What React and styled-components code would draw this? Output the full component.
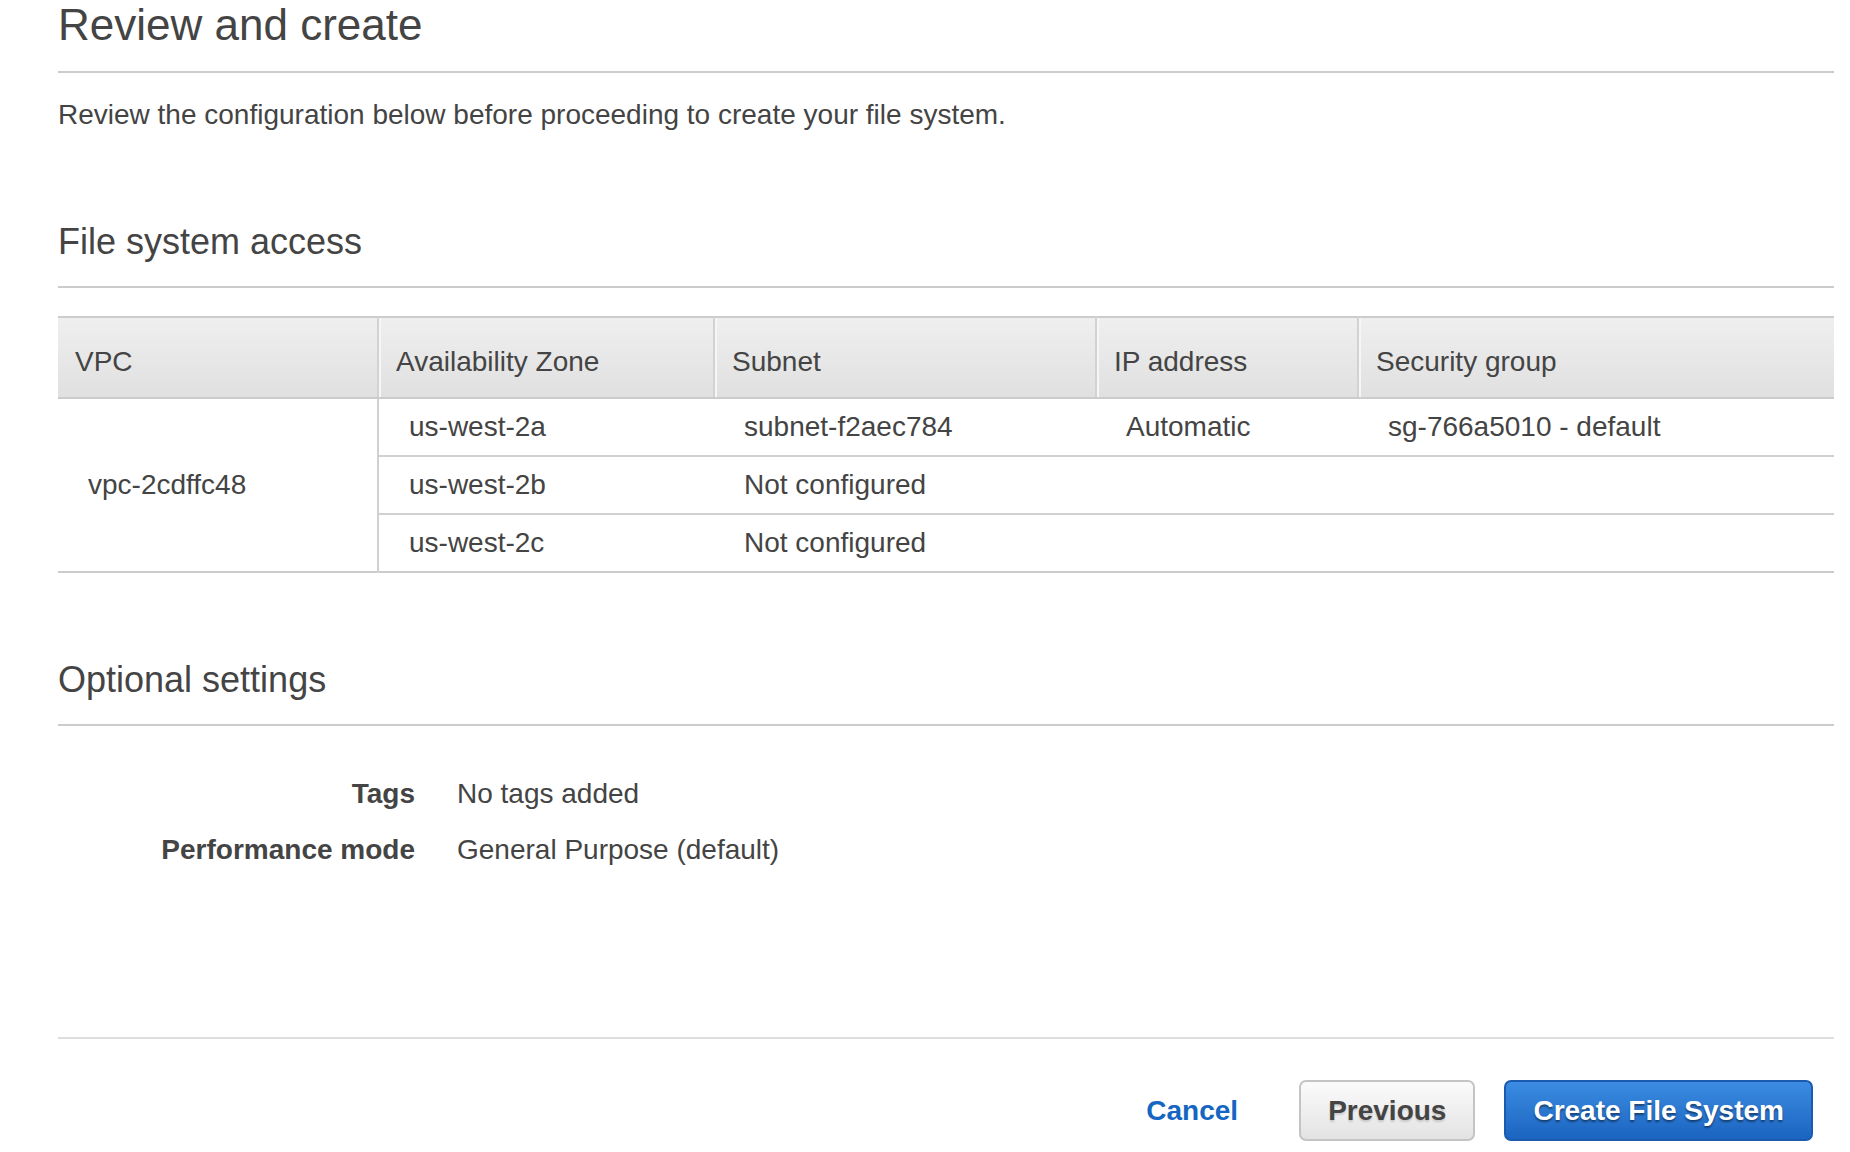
import React from "react";
import styled, { createGlobalStyle } from "styled-components";

const GlobalStyle = createGlobalStyle`
  html, body {
    margin: 0;
    padding: 0;
    background: #fff;
  }
  body {
    font-family: "Liberation Sans", Arial, Helvetica, sans-serif;
    color: #444;
  }
`;

const columns = [
  { label: "VPC", width: 320 },
  { label: "Availability Zone", width: 336 },
  { label: "Subnet", width: 382 },
  { label: "IP address", width: 262 },
  { label: "Security group", width: 476 },
];

const zones = [
  { zone: "us-west-2a", subnet: "subnet-f2aec784", ip: "Automatic", group: "sg-766a5010 - default" },
  { zone: "us-west-2b", subnet: "Not configured", ip: "", group: "" },
  { zone: "us-west-2c", subnet: "Not configured", ip: "", group: "" },
];

const settings = [
  { label: "Tags", value: "No tags added" },
  { label: "Performance mode", value: "General Purpose (default)" },
];

const App = () => {
  return (
    <>
      <GlobalStyle />
      <Page>
        <Title>Review and create</Title>
        <Rule />
        <Intro>Review the configuration below before proceeding to create your file system.</Intro>

        <SectionTitle>File system access</SectionTitle>
        <Rule $gap={23} />
        <Table>
          <colgroup>
            {columns.map((c) => (
              <col key={c.label} style={{ width: c.width }} />
            ))}
          </colgroup>
          <thead>
            <tr>
              {columns.map((c, i) => (
                <Th key={c.label} $first={i === 0}>
                  {c.label}
                </Th>
              ))}
            </tr>
          </thead>
          <tbody>
            {zones.map((z, i) => (
              <tr key={z.zone}>
                {i === 0 && <VpcCell rowSpan={zones.length}>vpc-2cdffc48</VpcCell>}
                <Td $zone>{z.zone}</Td>
                <Td>{z.subnet}</Td>
                <Td>{z.ip}</Td>
                <Td>{z.group}</Td>
              </tr>
            ))}
          </tbody>
        </Table>

        <SectionTitle $top={86}>Optional settings</SectionTitle>
        <Rule $gap={23} />
        <Details>
          {settings.map((s) => (
            <React.Fragment key={s.label}>
              <Label>{s.label}</Label>
              <Value>{s.value}</Value>
            </React.Fragment>
          ))}
        </Details>

        <Footer>
          <CancelLink href="#">Cancel</CancelLink>
          <Button>Previous</Button>
          <Button $primary>Create File System</Button>
        </Footer>
      </Page>
    </>
  );
};

export default App;

const Page = styled.div`
  padding: 0 16px 40px 58px;
`;

const Title = styled.h1`
  margin: 0;
  font-size: 44px;
  line-height: 50px;
  font-weight: 400;
  color: #444;
`;

const Rule = styled.div`
  height: 2px;
  background: #cccccc;
  margin-top: ${(p) => p.$gap ?? 21}px;
`;

const Intro = styled.p`
  margin: 25px 0 0;
  font-size: 28px;
  line-height: 34px;
`;

const SectionTitle = styled.h2`
  margin: ${(p) => p.$top ?? 89}px 0 0;
  font-size: 36px;
  line-height: 42px;
  font-weight: 400;
  color: #444;
`;

const Table = styled.table`
  width: 100%;
  margin-top: 28px;
  border-collapse: collapse;
  table-layout: fixed;
  font-size: 28px;
  line-height: 34px;
  border-top: 2px solid #cccccc;
  border-bottom: 2px solid #cccccc;
`;

const Th = styled.th`
  text-align: left;
  font-weight: 400;
  color: #444;
  height: 79px;
  padding: 27px 0 18px 17px;
  box-sizing: border-box;
  vertical-align: top;
  background: linear-gradient(#efefef, #e0e0e0);
  border-bottom: 2px solid #cccccc;
  border-left: ${(p) => (p.$first ? "none" : "2px solid #d2d2d2")};
  box-shadow: ${(p) => (p.$first ? "none" : "inset 2px 0 0 #f6f6f6")};
  white-space: nowrap;
`;

const Td = styled.td`
  height: 56px;
  padding: 0 0 0 30px;
  vertical-align: middle;
  border-top: 2px solid #d0d0d0;
  border-left: ${(p) => (p.$zone ? "2px solid #d0d0d0" : "none")};
  white-space: nowrap;
  tr:first-child > & {
    border-top: none;
  }
`;

const VpcCell = styled.td`
  padding: 0 0 0 30px;
  vertical-align: middle;
`;

const Details = styled.div`
  display: grid;
  grid-template-columns: 357px 1fr;
  column-gap: 42px;
  row-gap: 22px;
  margin-top: 51px;
  font-size: 28px;
  line-height: 34px;
`;

const Label = styled.div`
  text-align: right;
  font-weight: 700;
`;

const Value = styled.div``;

const Footer = styled.div`
  margin-top: 170px;
  padding-top: 41px;
  padding-right: 21px;
  border-top: 2px solid #dedede;
  display: flex;
  justify-content: flex-end;
  align-items: center;
`;

const CancelLink = styled.a`
  font-size: 28px;
  font-weight: 700;
  color: #1466c2;
  text-decoration: none;
  margin-right: 61px;
`;

const Button = styled.button`
  height: 61px;
  padding: 0 27px;
  margin-left: ${(p) => (p.$primary ? 29 : 0)}px;
  font-family: inherit;
  font-size: 28px;
  font-weight: 700;
  border-radius: 7px;
  border: 2px solid ${(p) => (p.$primary ? "#1a5bb0" : "#c4c4c4")};
  background: ${(p) =>
    p.$primary
      ? "linear-gradient(#3b8ce2, #1b64c0)"
      : "linear-gradient(#fbfbfb, #e3e3e3)"};
  color: ${(p) => (p.$primary ? "#fff" : "#444")};
  text-shadow: ${(p) =>
    p.$primary ? "0 2px 2px rgba(0, 0, 0, 0.45)" : "0 2px 2px rgba(0, 0, 0, 0.15)"};
  cursor: pointer;
`;
